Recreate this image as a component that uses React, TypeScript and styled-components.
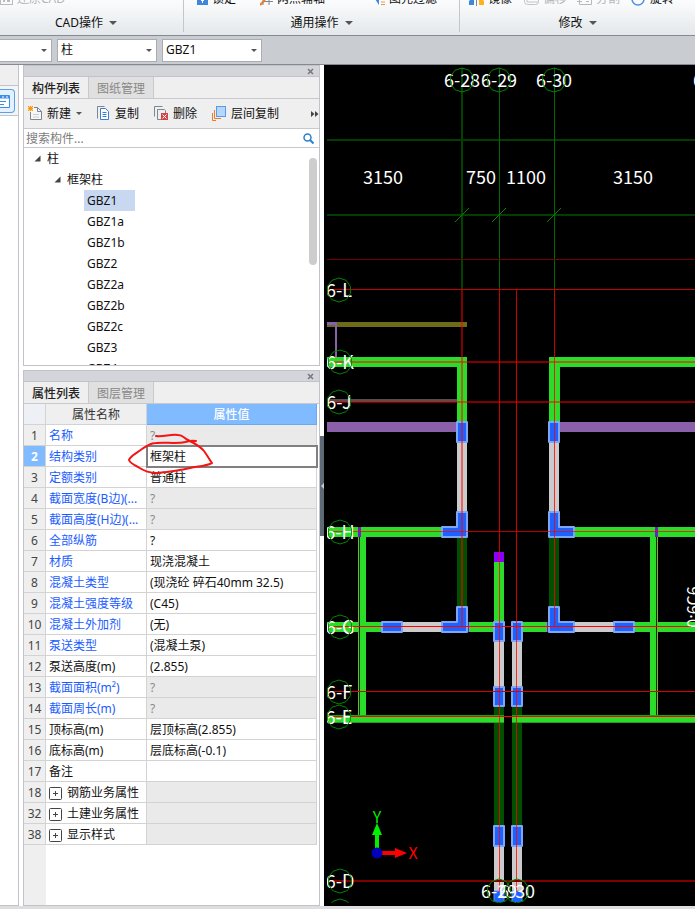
import React from 'react';
import styled, { createGlobalStyle, css } from 'styled-components';

const GlobalStyle = createGlobalStyle`
  * { box-sizing: border-box; }
  body {
    margin: 0;
    background: #fff;
    color: #111;
    font: 12px/16px "Noto Sans", "Noto Sans CJK SC", sans-serif;
  }
  button, input, select { font: inherit; color: inherit; }
  button { padding: 0; border: 0; background: none; cursor: pointer; }
`;

const Page = styled.div`
  display: flex;
  flex-direction: column;
  min-height: 100vh;
  overflow: hidden;
`;

/* ---------- ribbon ---------- */

const Ribbon = styled.header`
  display: flex;
  height: 36px;
  background: linear-gradient(#fbfcfd, #e4e8eb);
  border-bottom: 1px solid #858a92;
`;

const RibbonGroup = styled.section<{ $width?: number; $inset: number }>`
  flex: ${p => (p.$width ? `0 0 ${p.$width}px` : '1')};
  display: flex;
  flex-direction: column;
  justify-content: space-between;
  padding: 0 0 3px;
  min-width: 0;
  ${p => p.$width && css`
    border-right: 1px solid transparent;
    border-image: linear-gradient(#c3c7cb 90%, transparent 90%) 1;
  `}
  & > div { padding-left: ${p => p.$inset}px; }
`;

const RibbonTools = styled.div<{ $columns: string }>`
  display: grid;
  grid-template-columns: ${p => p.$columns};
  align-content: end;
  height: 7px;
  overflow: hidden;
`;

const RibbonButton = styled.button<{ $muted?: boolean }>`
  display: flex;
  align-items: center;
  gap: 4px;
  height: 16px;
  white-space: nowrap;
  color: ${p => (p.$muted ? '#b4b6b8' : '#111')};
`;

const GroupCaption = styled.button<{ $shift?: boolean }>`
  display: flex;
  align-items: center;
  justify-content: center;
  gap: 6px;
  height: 18px;
  padding-right: ${p => (p.$shift ? 11 : 0)}px;
`;

const Caret = styled.span`
  flex: none;
  border: solid transparent;
  border-width: 4px 4px 0;
  border-top-color: #555;
`;

const SmallCaret = styled(Caret)`
  border-width: 3px 3px 0;
  border-top-color: #555;
`;

/* ---------- selector bar ---------- */

const SelectorBar = styled.div`
  display: flex;
  align-items: center;
  gap: 5px;
  height: 29px;
  background: #c9ccd1;
  border-bottom: 1px solid #858a92;
`;

const SelectBox = styled.label<{ $width: number; $cut?: boolean }>`
  display: flex;
  align-items: center;
  width: ${p => p.$width}px;
  height: 23px;
  padding-right: 4px;
  background: #fff;
  border: 1px solid #a9acb2;
  ${p => p.$cut && css`border-left: 0;`}
  select {
    flex: 1;
    min-width: 0;
    padding: 0 0 0 3px;
    border: 0;
    outline: 0;
    appearance: none;
    background: none;
  }
`;

/* ---------- work area ---------- */

const Work = styled.main`
  flex: 1;
  display: flex;
  background: #fff;
`;

const SideStrip = styled.nav`
  flex: 0 0 19px;
  display: flex;
  flex-direction: column;
  border-right: 1px solid #c2c3ca;
  border-bottom: 1px solid #c2c3ca;
`;

const StripHead = styled.div`
  height: 21px;
  background: #efefef;
  border-bottom: 1px solid #c2c3ca;
`;

const StripSlot = styled.div`
  height: 30px;
  padding-top: 3px;
  border-bottom: 1px solid #c2c3ca;
  background: #f4f4f4;
`;

const StripButton = styled.button`
  display: flex;
  align-items: center;
  width: 15px;
  height: 24px;
  border: 1px solid #56a0ee;
  border-left: 0;
  border-radius: 0 4px 4px 0;
  background: #e4f1fe;
`;

const Dock = styled.aside`
  flex: 0 0 297px;
  display: flex;
  flex-direction: column;
  gap: 4px;
  margin-left: 4px;
`;

const Panel = styled.section<{ $grow?: boolean }>`
  position: relative;
  flex: ${p => (p.$grow ? '1' : 'none')};
  display: flex;
  flex-direction: column;
  border: solid #c2c3ca;
  border-width: 0 1px 1px;
  background: #fff;
`;

const PanelTitle = styled.div`
  display: flex;
  align-items: center;
  justify-content: flex-end;
  height: 12px;
  padding-right: 5px;
  background: #d4d5da;
  border: solid #c2c3ca;
  border-width: 1px 0;
  button { display: flex; }
`;

const Tabs = styled.div`
  display: flex;
  height: 22px;
  background: #efefef;
  border-bottom: 1px solid #c8c9ce;
`;

const Tab = styled.button<{ $active?: boolean }>`
  width: 65px;
  border-right: 1px solid #c8c9ce;
  background: ${p => (p.$active ? '#efefef' : '#e0e0e0')};
  color: ${p => (p.$active ? '#222' : '#888')};
  font-weight: ${p => (p.$active ? 500 : 400)};
  font-family: "Noto Sans CJK SC", sans-serif;
`;

const ToolRow = styled.div`
  display: flex;
  align-items: center;
  gap: 15px;
  height: 30px;
  padding-left: 4px;
  background: #efefef;
  border-bottom: 1px solid #c8c9ce;
`;

const ToolButton = styled.button`
  display: flex;
  align-items: center;
  gap: 5px;
  white-space: nowrap;
`;

const MoreButton = styled.button`
  display: flex;
  margin-left: auto;
`;

const SearchRow = styled.label`
  display: flex;
  align-items: center;
  height: 19px;
  padding: 0 5px 0 2px;
  border-bottom: 1px solid #c8c9ce;
  input {
    flex: 1;
    min-width: 0;
    height: 18px;
    padding: 0;
    border: 0;
    outline: 0;
    background: none;
  }
  input::placeholder { color: #7d7d7d; opacity: 1; }
`;

const TreeArea = styled.div`
  display: flex;
  height: 217px;
  overflow: hidden;
`;

const Tree = styled.ul`
  flex: 1;
  margin: 0;
  padding: 0;
  list-style: none;
`;

const TreeRow = styled.li<{ $depth: number }>`
  display: flex;
  align-items: center;
  gap: 6px;
  height: 21px;
  padding-left: ${p => 10 + p.$depth * 20}px;
`;

const Leaf = styled.span<{ $selected?: boolean }>`
  height: 21px;
  min-width: 51px;
  padding: 0 3px;
  line-height: 21px;
  background: ${p => (p.$selected ? '#c8d8f0' : 'transparent')};
`;

const ScrollThumb = styled.div`
  width: 8px;
  height: 107px;
  margin: 10px 2px 0 0;
  border-radius: 4px;
  background: #cdcdcd;
`;

/* ---------- property table ---------- */

const TableArea = styled.div`
  flex: 1;
  padding-right: 2px;
  background: linear-gradient(to right, #efefef 22px, #fff 22px);
`;

const PropertyTable = styled.table`
  width: 100%;
  table-layout: fixed;
  border-spacing: 0;
  th, td {
    height: 21px;
    padding: 2px 3px 0;
    border: solid #d3d3d3;
    border-width: 0 1px 1px 0;
    font-weight: 400;
    text-align: left;
    line-height: 16px;
    white-space: nowrap;
    overflow: hidden;
    text-overflow: ellipsis;
  }
  col:nth-child(1) { width: 22px; }
  col:nth-child(2) { width: 101px; }
  thead th { text-align: center; background: #efefef; color: #333; }
  thead th:first-child { background: #edf1f6; }
  thead th:last-child {
    background: #80baff;
    border-color: #68a9ef;
    color: #fff;
    font-weight: 500;
  }
`;

const NumberCell = styled.th<{ $selected?: boolean }>`
  && {
    padding: 2px 0 0;
    text-align: center;
    background: ${p => (p.$selected ? '#80baff' : '#efefef')};
    color: ${p => (p.$selected ? '#fff' : '#444')};
    font-weight: ${p => (p.$selected ? 700 : 400)};
  }
`;

const NameCell = styled.td<{ $linked?: boolean }>`
  background: #fff;
  color: ${p => (p.$linked ? '#1a5cff' : '#111')};
`;

const ValueCell = styled.td<{ $locked?: boolean; $selected?: boolean }>`
  background: ${p => (p.$locked ? '#eaeaea' : '#fff')};
  color: ${p => (p.$locked ? '#8b8b8b' : '#111')};
  ${p => p.$selected && css`
    outline: 2px solid #808080;
    outline-offset: -1px;
  `}
`;

const GroupName = styled.span`
  display: flex;
  align-items: center;
  gap: 5px;
`;

const ExpandButton = styled.button`
  display: flex;
  flex: none;
`;

const InkMark = styled.svg`
  position: absolute;
  left: 100px;
  top: 60px;
  pointer-events: none;
`;

/* ---------- canvas ---------- */

const Splitter = styled.div`
  flex: 0 0 4px;
  display: flex;
  align-items: center;
`;

const SplitHandle = styled.button`
  display: flex;
  align-items: center;
  width: 4px;
  height: 100px;
  background: #5f6a77;
`;

const Viewport = styled.div`
  flex: 1;
  min-width: 0;
  display: grid;
  padding: 0 0 3px 3px;
  background: #000;
  svg { width: 100%; height: 100%; min-height: 0; contain: size; display: block; overflow: hidden; }
`;

const StatusEdge = styled.footer`
  height: 3px;
  background: #dededf;
`;

/* ---------- data ---------- */

const leaves = ['GBZ1', 'GBZ1a', 'GBZ1b', 'GBZ2', 'GBZ2a', 'GBZ2b', 'GBZ2c', 'GBZ3', 'GBZ4'];

type Prop = { no: number; name: string; value?: string; linked?: boolean; locked?: boolean; group?: boolean };

const properties: Prop[] = [
  { no: 1, name: '名称', value: '?', linked: true, locked: true },
  { no: 2, name: '结构类别', value: '框架柱', linked: true },
  { no: 3, name: '定额类别', value: '普通柱', linked: true },
  { no: 4, name: '截面宽度(B边)(...', value: '?', linked: true, locked: true },
  { no: 5, name: '截面高度(H边)(...', value: '?', linked: true, locked: true },
  { no: 6, name: '全部纵筋', value: '?', linked: true },
  { no: 7, name: '材质', value: '现浇混凝土', linked: true },
  { no: 8, name: '混凝土类型', value: '(现浇砼 碎石40mm 32.5)', linked: true },
  { no: 9, name: '混凝土强度等级', value: '(C45)', linked: true },
  { no: 10, name: '混凝土外加剂', value: '(无)', linked: true },
  { no: 11, name: '泵送类型', value: '(混凝土泵)', linked: true },
  { no: 12, name: '泵送高度(m)', value: '(2.855)' },
  { no: 13, name: '截面面积(m²)', value: '?', linked: true, locked: true },
  { no: 14, name: '截面周长(m)', value: '?', linked: true, locked: true },
  { no: 15, name: '顶标高(m)', value: '层顶标高(2.855)' },
  { no: 16, name: '底标高(m)', value: '层底标高(-0.1)' },
  { no: 17, name: '备注' },
  { no: 18, name: '钢筋业务属性', locked: true, group: true },
  { no: 32, name: '土建业务属性', locked: true, group: true },
  { no: 38, name: '显示样式', locked: true, group: true },
];

/* ---------- icons ---------- */

const CloseIcon = () => (
  <svg width="7" height="7" viewBox="0 0 7 7"><path d="M1 1l5 5M6 1L1 6" stroke="#777" strokeWidth="1.5" /></svg>
);

const NewIcon = () => (
  <svg width="14" height="15" viewBox="0 0 14 15" fill="none">
    <path d="M6 1.5h3.500l4 4v8H2.500V6" stroke="#7d8791" fill="#f7f7f7" />
    <path d="M9.500 1.500v4h4" stroke="#7d8791" />
    <path d="M5 8.500h6M5 11h6" stroke="#c9cdd1" />
    <rect width="5" height="5" fill="#ffd27a" />
    <path d="M0 0l5 5M5 0L0 5M2.500 0v5M0 2.500h5" stroke="#f59a1c" />
  </svg>
);

const CopyIcon = () => (
  <svg width="13" height="15" viewBox="0 0 13 15" fill="none">
    <path d="M.5 12.500V.5h7" stroke="#7d8791" />
    <path d="M3.500 2.500h5l3 3v8h-8z" fill="#fff" stroke="#3b7fd0" />
    <path d="M5.500 6.500h4M5.500 8.500h4M5.500 10.500h4" stroke="#3b7fd0" />
  </svg>
);

const DeleteIcon = () => (
  <svg width="14" height="15" viewBox="0 0 14 15" fill="none">
    <path d="M.5 10.500V.5h8" stroke="#7d8791" />
    <path d="M7 13.500H3.500v-10h7l1 1V8" stroke="#7d8791" />
    <rect x="7" y="7" width="7" height="7" fill="#d14545" />
    <path d="M8.500 8.500l4 4M12.500 8.500l-4 4" stroke="#fff" />
  </svg>
);

const LayerIcon = () => (
  <svg width="14" height="15" viewBox="0 0 14 15" fill="none">
    <rect x="4.500" y=".5" width="9" height="10" fill="#b5d7ff" stroke="#5b9be6" />
    <path d="M2.500 4v8.500H9" stroke="#ee7a22" />
    <path d="M.5 7v7.500H4" stroke="#ee7a22" />
  </svg>
);

const MoreIcon = () => (
  <svg width="8" height="6" viewBox="0 0 8 6" fill="#444"><path d="M0 0l3.500 3L0 6zM4 0l3.500 3L4 6z" /></svg>
);

const SearchIcon = () => (
  <svg width="11" height="11" viewBox="0 0 11 11" fill="none" stroke="#2a82c8">
    <circle cx="4.500" cy="4.500" r="3.500" strokeWidth="1.500" /><path d="M7 7l3.500 3.500" strokeWidth="2" />
  </svg>
);

const TreeArrow = () => (
  <svg width="7" height="7" viewBox="0 0 7 7"><path d="M6.500 .5v6h-6z" fill="#444" /></svg>
);

const PlusBox = () => (
  <svg width="13" height="13" viewBox="0 0 13 13" fill="none" stroke="#444">
    <rect x=".5" y=".5" width="12" height="12" rx="1" /><path d="M4 6.500h5M6.500 4v5" />
  </svg>
);

const StripIcon = () => (
  <svg width="10" height="15" viewBox="0 0 10 15" fill="none" stroke="#3f8de0">
    <path d="M0 1.500h9.500v12H0" fill="#fff" /><path d="M0 3h9" strokeWidth="3" />
    <path d="M2 3h2M6 3h2" stroke="#fff" /><path d="M0 7.500h6M0 10.500h4" />
  </svg>
);

const ribbonArt: Record<string, React.ReactNode> = {
  restore: <><rect x=".5" y="1.500" width="12" height="11" stroke="#bbb" /><path d="M3 9h2m2 0h3" stroke="#bbb" strokeWidth="2" /></>,
  lock: <><rect x="0" y="3" width="11" height="10" fill="#3f86dd" /><path d="M5.500 7v4M4 8.500h3" stroke="#fff" /></>,
  axis: <><path d="M3 13V4M9 13V4M4 9.500h9" stroke="#7d8791" /><path d="M0 13l5-5" stroke="#ee7a22" strokeWidth="2" /></>,
  filter: <><path d="M0 7h4v6z" fill="#3f86dd" /><path d="M6 7.500h4M6 10h4M6 12.500h4" stroke="#ee9a4a" /></>,
  mirror: <><path d="M0 13V9l5-5v9z" fill="#3f86dd" /><path d="M7.500 2v12" stroke="#7d8791" /><path d="M15 13V9l-5-5v9z" fill="#ffb21e" /></>,
  offset: <><rect x="1.500" y="2.500" width="14" height="10" rx="3" stroke="#c4c4c4" /><path d="M4 4v6h11" stroke="#c4c4c4" /></>,
  split: <><path d="M2.500 3v9.500h12V3M0 9.500h5M9 9.500h3" stroke="#b8b8b8" /></>,
  rotate: <circle cx="7" cy="7" r="6" stroke="#4a90e2" strokeWidth="1.500" />,
};

const RibbonIcon = ({ kind, width }: { kind: string; width: number }) => (
  <svg width={width} height="14" viewBox={`0 0 ${width} 14`} fill="none">{ribbonArt[kind]}</svg>
);

/* ---------- floor plan ---------- */

const GREEN = '#2bdc2b';
const DARK = '#005000';
const GREY = '#cbcbcb';
const PURPLE = '#8b60aa';
const VIOLET = '#8a00ff';

type Box = [number, number, number, number, string];

const FAR = 3000;

const walls: Box[] = [
  [327, 322, 140, 5, '#6e6c18'],
  [327, 322, 10, 3, PURPLE],
  [335, 322, 2, 35, PURPLE],
  [327, 399, 130, 3, '#505050'],
  [327, 357, 140, 10, GREEN],
  [457, 357, 10, 65, GREEN],
  [549, 357, FAR, 10, GREEN],
  [549, 357, 11, 65, GREEN],
  [327, 422, 130, 10, PURPLE],
  [559, 422, FAR, 10, PURPLE],
  [457, 442, 10, 70, GREY],
  [549, 442, 10, 70, GREY],
  [327, 527, 115, 10, GREEN],
  [574, 527, FAR, 10, GREEN],
  [457, 537, 10, 70, DARK],
  [549, 537, 10, 70, DARK],
  [327, 622, 55, 10, GREEN],
  [402, 622, 40, 10, GREY],
  [469, 622, 25, 10, GREEN],
  [522, 622, 25, 10, GREEN],
  [467, 622, 2, 10, VIOLET],
  [547, 622, 2, 10, VIOLET],
  [574, 622, 40, 10, GREY],
  [634, 622, FAR, 10, GREEN],
  [358, 537, 8, 179, GREEN],
  [650, 537, 8, 179, GREEN],
  [359, 537, 1, 179, '#3a1000'],
  [656, 537, 1, 179, '#5a0800'],
  [358, 527, 3, 10, '#6d1fc0'],
  [655, 527, 3, 10, '#6d1fc0'],
  [494, 552, 10, 10, VIOLET],
  [494, 562, 10, 60, GREEN],
  [494, 641, 10, 45, GREY],
  [512, 641, 10, 45, GREY],
  [494, 706, 10, 120, DARK],
  [512, 706, 10, 120, DARK],
  [494, 846, 10, 46, GREY],
  [512, 846, 10, 46, GREY],
  [327, 715, 177, 8, '#1fa01f'],
  [327, 716, 177, 6, GREEN],
  [512, 715, FAR, 8, '#1fa01f'],
  [512, 716, FAR, 6, GREEN],
];

const columns = [
  'M457 422h10v20h-10z',
  'M549 422h10v20h-10z',
  'M457 512h10v25h-25v-10h15z',
  'M549 512h10v15h15v10h-25z',
  'M457 607h10v25h-25v-10h15z',
  'M549 607h10v15h15v10h-25z',
  'M382 622h20v10h-20z',
  'M614 622h20v10h-20z',
  'M494 622h10v19h-10z',
  'M512 622h10v19h-10z',
  'M494 687h10v19h-10z',
  'M512 687h10v19h-10z',
  'M494 826h10v20h-10z',
  'M512 826h10v20h-10z',
];

const gridLines: Box[] = [
  [327, 139, FAR, 2, '#003f00'],
  [327, 214, FAR, 2, '#003f00'],
  [461, 68, 2, 222, '#004400'],
  [499, 68, 1, 222, '#006a00'],
  [554, 68, 1, 222, '#006a00'],
  [327, 259, FAR, 1, '#780000'],
  [327, 289, FAR, 1, '#c80000'],
];

const redLines: Box[] = [
  [461, 290, 2, 337, 'rgba(255,0,0,.5)'],
  [499, 290, 1, 602, 'rgba(255,0,0,.78)'],
  [516, 290, 1, 602, 'rgba(255,0,0,.78)'],
  [554, 290, 1, 337, 'rgba(255,0,0,.8)'],
  [327, 361, FAR, 2, 'rgba(255,0,0,.5)'],
  [327, 401, FAR, 2, 'rgba(255,0,0,.5)'],
  [327, 531, FAR, 1, 'rgba(255,0,0,.72)'],
  [327, 626, FAR, 1, '#f00'],
  [327, 691, FAR, 1, '#d80000'],
  [327, 716, FAR, 1, '#f00'],
  [327, 880, FAR, 2, '#800000'],
];

const axisMarks: [string, number, number][] = [
  ['6-28', 462, 80], ['6-29', 499, 80], ['6-30', 554, 80], ['6-31', 711, 80],
  ['6-L', 339, 290], ['6-K', 340, 362], ['6-J', 339, 402], ['6-H', 340, 532],
  ['6-G', 340, 627], ['6-F', 339, 692], ['6-E', 339, 717], ['6-D', 340, 881],
  ['6-29', 499, 891], ['6-30', 517, 891], ['', 340, 911],
];

const ring = (cx: number, cy: number) =>
  Array.from({ length: 10 }, (_, i) => {
    const a = (i * Math.PI) / 5;
    return `${cx + 12 * Math.sin(a)},${cy - 12 * Math.cos(a)}`;
  }).join(' ');

const Boxes = ({ items }: { items: Box[] }) => (
  <>{items.map(([x, y, w, h, c], i) => <rect key={i} x={x} y={y} width={w} height={h} fill={c} />)}</>
);

const PlanText = styled.text`
  fill: #fff;
  font: 18px "Noto Sans CJK SC", sans-serif;
  text-anchor: middle;
`;

const SideText = styled(PlanText)`
  font-size: 16px;
`;

const AxisLetter = styled.text`
  font: 16px "Noto Sans CJK SC", sans-serif;
  text-anchor: middle;
`;

const FloorPlan = () => (
  <svg role="img" aria-label="平面图">
    <g transform="translate(-327 -65)">
      <Boxes items={gridLines} />
      {[462, 499, 554].map(x => (
        <path key={x} d={`M${x - 7} 222l14-14`} stroke="#0a8200" />
      ))}
      <Boxes items={walls} />
      {columns.map(d => (
        <path key={d} d={d} fill="#1c62ff" stroke="#7da6f8" strokeWidth="2" strokeLinejoin="round" />
      ))}
      <path d="M494 902v-11h10v11M512 902v-11h10v11" fill="#1c62ff" stroke="#5d8fff" />
      <Boxes items={redLines} />
      {axisMarks.map(([label, x, y]) => (
        <g key={`${label}${x}${y}`}>
          <PlanText x={x} y={y + 7}>{label}</PlanText>
          <polygon points={ring(x, y)} fill="none" stroke="#008400" />
        </g>
      ))}
      {([['3150', 383], ['750', 481], ['1100', 526], ['3150', 633]] as [string, number][]).map(([t, x]) => (
        <PlanText key={x} x={x} y={184}>{t}</PlanText>
      ))}
      <SideText transform="translate(699 607) rotate(-90)">0:6C6</SideText>
      <path d="M375 848v-13h-3l5-12 5 12h-3v13z" fill="#00f000" />
      <path d="M382 851h13v-3l12 5-12 5v-3h-13z" fill="#f00" />
      <circle cx="377" cy="853" r="5.500" fill="#0000b8" />
      <AxisLetter x={377} y={823} fill="#00f000">Y</AxisLetter>
      <AxisLetter x={413} y={859} fill="#f00">X</AxisLetter>
    </g>
  </svg>
);

/* ---------- page ---------- */

const PanelHead = ({ active, other }: { active: string; other: string }) => (
  <>
    <PanelTitle><button aria-label="关闭"><CloseIcon /></button></PanelTitle>
    <Tabs role="tablist">
      <Tab role="tab" aria-selected $active>{active}</Tab>
      <Tab role="tab" aria-selected={false}>{other}</Tab>
    </Tabs>
  </>
);

export default function App() {
  return (
    <>
      <GlobalStyle />
      <Page>
        <Ribbon>
          <RibbonGroup $width={184} $inset={0}>
            <RibbonTools $columns="auto">
              <RibbonButton $muted><RibbonIcon kind="restore" width={13} />还原CAD</RibbonButton>
            </RibbonTools>
            <GroupCaption $shift>CAD操作 <Caret /></GroupCaption>
          </RibbonGroup>
          <RibbonGroup $width={276} $inset={13}>
            <RibbonTools $columns="63px 115px auto">
              <RibbonButton><RibbonIcon kind="lock" width={11} />锁定</RibbonButton>
              <RibbonButton><RibbonIcon kind="axis" width={13} />两点辅轴</RibbonButton>
              <RibbonButton><RibbonIcon kind="filter" width={10} />图元过滤</RibbonButton>
            </RibbonTools>
            <GroupCaption>通用操作 <Caret /></GroupCaption>
          </RibbonGroup>
          <RibbonGroup $inset={9}>
            <RibbonTools $columns="54px 54px 54px auto">
              <RibbonButton><RibbonIcon kind="mirror" width={15} />镜像</RibbonButton>
              <RibbonButton $muted><RibbonIcon kind="offset" width={16} />偏移</RibbonButton>
              <RibbonButton $muted><RibbonIcon kind="split" width={15} />分割</RibbonButton>
              <RibbonButton><RibbonIcon kind="rotate" width={15} />旋转</RibbonButton>
            </RibbonTools>
            <GroupCaption>修改 <Caret /></GroupCaption>
          </RibbonGroup>
        </Ribbon>

        <SelectorBar>
          <SelectBox $width={52} $cut>
            <select aria-label="楼层"><option></option></select><SmallCaret />
          </SelectBox>
          <SelectBox $width={100}>
            <select aria-label="构件类型"><option>柱</option></select><SmallCaret />
          </SelectBox>
          <SelectBox $width={100}>
            <select aria-label="构件"><option>GBZ1</option></select><SmallCaret />
          </SelectBox>
        </SelectorBar>

        <Work>
          <SideStrip>
            <StripHead />
            <StripSlot><StripButton aria-label="列表"><StripIcon /></StripButton></StripSlot>
          </SideStrip>

          <Dock>
            <Panel>
              <PanelHead active="构件列表" other="图纸管理" />
              <ToolRow>
                <ToolButton><NewIcon />新建 <SmallCaret /></ToolButton>
                <ToolButton><CopyIcon />复制</ToolButton>
                <ToolButton><DeleteIcon />删除</ToolButton>
                <ToolButton><LayerIcon />层间复制</ToolButton>
                <MoreButton aria-label="更多"><MoreIcon /></MoreButton>
              </ToolRow>
              <SearchRow>
                <input aria-label="搜索构件" placeholder="搜索构件..." />
                <SearchIcon />
              </SearchRow>
              <TreeArea>
                <Tree role="tree">
                  <TreeRow role="treeitem" $depth={0}><TreeArrow />柱</TreeRow>
                  <TreeRow role="treeitem" $depth={1}><TreeArrow />框架柱</TreeRow>
                  {leaves.map((name, i) => (
                    <TreeRow role="treeitem" key={name} $depth={2.5} aria-selected={i === 0}>
                      <Leaf $selected={i === 0}>{name}</Leaf>
                    </TreeRow>
                  ))}
                </Tree>
                <ScrollThumb />
              </TreeArea>
            </Panel>

            <Panel $grow>
              <PanelHead active="属性列表" other="图层管理" />
              <TableArea>
                <PropertyTable>
                  <colgroup><col /><col /><col /></colgroup>
                  <thead>
                    <tr><th /><th>属性名称</th><th>属性值</th></tr>
                  </thead>
                  <tbody>
                    {properties.map(p => (
                      <tr key={p.no}>
                        <NumberCell scope="row" $selected={p.no === 2}>{p.no}</NumberCell>
                        <NameCell $linked={p.linked}>
                          {p.group
                            ? <GroupName><ExpandButton aria-label={`展开${p.name}`}><PlusBox /></ExpandButton>{p.name}</GroupName>
                            : p.name}
                        </NameCell>
                        <ValueCell $locked={p.locked} $selected={p.no === 2}>{p.value}</ValueCell>
                      </tr>
                    ))}
                  </tbody>
                </PropertyTable>
              </TableArea>
              <InkMark width="92" height="48" viewBox="124 430 92 48" fill="none" stroke="#f51414" strokeWidth="2" strokeLinecap="round" strokeLinejoin="round">
                <path d="M156 436C164 437 170 434 178 435C183 435 184 438 188 440C194 443 200 446 204 451C207 455 209 459 212 463C204 467 198 466 190 468C178 471 168 472 157 473C150 473 144 471 138 467C134 465 130 463 129 460C130 456 137 453 142 449C147 446 150 443 156 443C166 442 176 444 185 442C189 441 192 440 196 441" />
              </InkMark>
            </Panel>
          </Dock>

          <Splitter>
            <SplitHandle aria-label="收起面板">
              <svg width="4" height="6" viewBox="0 0 4 6"><path d="M4 0v6L1 3z" fill="#c8ccd2" /></svg>
            </SplitHandle>
          </Splitter>

          <Viewport><FloorPlan /></Viewport>
        </Work>
        <StatusEdge />
      </Page>
    </>
  );
}
